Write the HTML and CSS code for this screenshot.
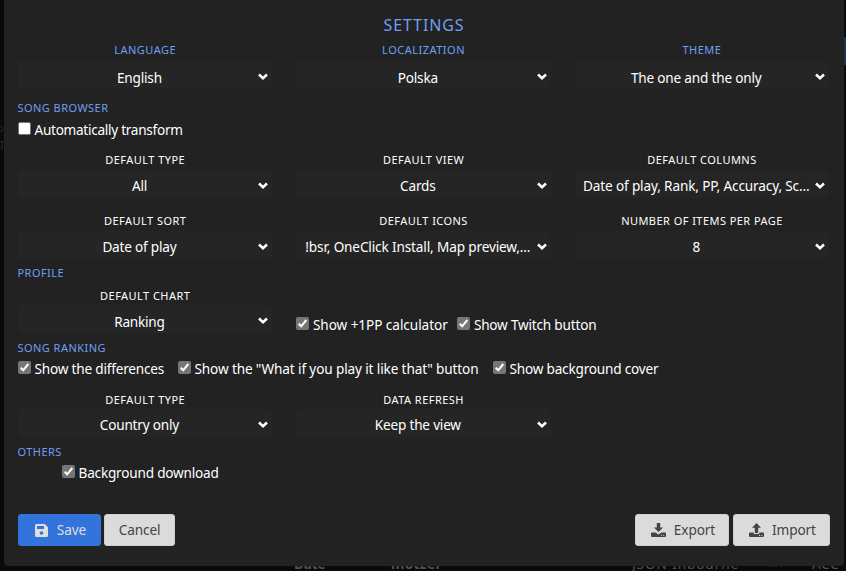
FILE: index.html
```
<!DOCTYPE html>
<html lang="en">
<head>
<meta charset="utf-8">
<title>Settings</title>
<link rel="stylesheet" href="styles.css">
</head>
<body>
<svg width="0" height="0" class="defs">
  <symbol id="chev" viewBox="0 0 10 7"><path d="M1 1.5 5 5.2 9 1.5" fill="none" stroke="#fff" stroke-width="2.5"/></symbol>
  <symbol id="tick" viewBox="0 0 13 13"><path d="M2.7 6.8 5.2 9.3 10.3 3" fill="none" stroke="#fff" stroke-width="2"/></symbol>
  <symbol id="disk" viewBox="0 0 13 13"><path fill="currentColor" fill-rule="evenodd" d="M1.5 0H9.7L13 3.3V11.5Q13 13 11.5 13H1.5Q0 13 0 11.5V1.5Q0 0 1.5 0ZM2 2V5H9V2ZM6.5 7.2A1.8 1.8 0 1 0 6.5 10.8 1.8 1.8 0 1 0 6.5 7.2Z"/></symbol>
  <symbol id="down" viewBox="0 0 15 14"><path fill="currentColor" d="M5.8 0H9.2V4.5H12L7.5 9 3 4.5H5.8Z"/><path fill="currentColor" fill-rule="evenodd" d="M1 9.5H4.5L7.5 11.5 10.5 9.5H14Q15 9.5 15 10.5V13Q15 14 14 14H1Q0 14 0 13V10.5Q0 9.5 1 9.5ZM10 11.7V12.7H11V11.7ZM12.2 11.7V12.7H13.2V11.7Z"/></symbol>
  <symbol id="up" viewBox="0 0 15 14"><path fill="currentColor" d="M5.8 10H9.2V4.8H12L7.5 0 3 4.8H5.8Z"/><path fill="currentColor" fill-rule="evenodd" d="M1 9.5H4.8V11H10.2V9.5H14Q15 9.5 15 10.5V13Q15 14 14 14H1Q0 14 0 13V10.5Q0 9.5 1 9.5ZM10 11.9V12.9H11V11.9ZM12.2 11.9V12.9H13.2V11.9Z"/></symbol>
</svg>
<div class="backdrop"><span class="b-date">Date</span><span class="b-name">motzel</span><span class="b-song">JSON Inbourne</span><span class="b-mark">××</span><span class="b-acc">ACC</span></div>
<i class="edge"></i><span class="ghost">o<br>q</span>
<main class="modal">
  <h1>Settings</h1>
  <section class="row first">
    <div class="field"><label class="blue">Language</label><div class="select"><span>English</span><svg><use href="#chev"/></svg></div></div>
    <div class="field"><label class="blue">Localization</label><div class="select"><span>Polska</span><svg><use href="#chev"/></svg></div></div>
    <div class="field"><label class="blue">Theme</label><div class="select"><span>The one and the only</span><svg><use href="#chev"/></svg></div></div>
  </section>
  <h2 class="h-browser">Song browser</h2>
  <div class="checks auto"><label class="check"><i class="box off"></i><span>Automatically transform</span></label></div>
  <section class="row second">
    <div class="field"><label>Default type</label><div class="select"><span>All</span><svg><use href="#chev"/></svg></div></div>
    <div class="field"><label>Default view</label><div class="select"><span>Cards</span><svg><use href="#chev"/></svg></div></div>
    <div class="field"><label>Default columns</label><div class="select"><span class="w-cols">Date of play, Rank, PP, Accuracy, Sc...</span><svg><use href="#chev"/></svg></div></div>
  </section>
  <section class="row third">
    <div class="field"><label>Default sort</label><div class="select"><span>Date of play</span><svg><use href="#chev"/></svg></div></div>
    <div class="field"><label>Default icons</label><div class="select"><span class="w-icons">!bsr, OneClick Install, Map preview,...</span><svg><use href="#chev"/></svg></div></div>
    <div class="field"><label>Number of items per page</label><div class="select"><span>8</span><svg><use href="#chev"/></svg></div></div>
  </section>
  <h2 class="h-profile">Profile</h2>
  <section class="row chart">
    <div class="field"><label>Default chart</label><div class="select"><span>Ranking</span><svg><use href="#chev"/></svg></div></div>
    <div class="checks profile"><label class="check c-calc"><i class="box"><svg><use href="#tick"/></svg></i><span>Show +1PP calculator</span></label><label class="check"><i class="box"><svg><use href="#tick"/></svg></i><span>Show Twitch button</span></label></div>
  </section>
  <h2>Song ranking</h2>
  <div class="checks ranking"><label class="check c-diff"><i class="box"><svg><use href="#tick"/></svg></i><span>Show the differences</span></label><label class="check c-what"><i class="box"><svg><use href="#tick"/></svg></i><span>Show the "What if you play it like that" button</span></label><label class="check"><i class="box"><svg><use href="#tick"/></svg></i><span>Show background cover</span></label></div>
  <section class="row fifth">
    <div class="field"><label>Default type</label><div class="select"><span>Country only</span><svg><use href="#chev"/></svg></div></div>
    <div class="field"><label>Data refresh</label><div class="select"><span>Keep the view</span><svg><use href="#chev"/></svg></div></div>
  </section>
  <h2>Others</h2>
  <div class="checks others"><label class="check"><i class="box"><svg><use href="#tick"/></svg></i><span>Background download</span></label></div>
  <footer>
    <button class="save"><svg class="disk"><use href="#disk"/></svg>Save</button>
    <button class="cancel">Cancel</button>
    <button class="export"><svg><use href="#down"/></svg>Export</button>
    <button class="import"><svg><use href="#up"/></svg>Import</button>
  </footer>
</main>
</body>
</html>
```
FILE: styles.css
```
* { box-sizing: border-box; }
body { margin: 0; height: 571px; overflow: hidden; position: relative; background: #0a0a0a; color: #fff; font: 13.6px/20px "Noto Sans", "Open Sans", sans-serif; letter-spacing: -.2px; }
.defs { position: absolute; }
.modal { position: relative; display: flex; flex-direction: column; width: 840px; height: 566px; margin-left: 4px; padding: 0 14px 0 14px; background: #222; border-radius: 0 0 4px 4px; }
h1 { margin: 0; height: 42px; padding-top: 15px; font-size: 16px; line-height: 20px; font-weight: 400; letter-spacing: .9px; text-align: center; text-transform: uppercase; color: #6f9ff5; }
h2, .field label { display: block; margin: 0; height: 16px; font-size: 11px; line-height: 16px; font-weight: 400; letter-spacing: .45px; text-transform: uppercase; white-space: nowrap; }
h2, .field .blue { color: #6f9ff5; }
h2 { margin: 7px 0 3px; text-indent: -.5px; }
.first label { letter-spacing: .5px; }
.h-browser { margin: 11px 0 4px; }
.h-profile { margin: 6px 0 7px; }
.row { display: grid; grid-template-columns: repeat(3, 254.4px); column-gap: 24px; }
.field { text-align: center; }
.select { display: flex; align-items: center; height: 28px; margin-top: 1px; padding: 5px 4px 0 8px; border-radius: 4px; background: #252525; }
.select span { flex: 1; white-space: nowrap; text-align: center; padding-right: 5.5px; }
.select svg { width: 10px; height: 7px; flex: none; margin-top: -2px; }
.first .select { margin-top: 3px; }
.first .select svg { margin-top: -3px; }
.second .select, .third .select { margin-top: 2px; }
.second .select span, .third .select span { margin-top: -2px; }
.second .select svg, .third .select svg { margin-top: -3px; }
.second { margin-top: 12px; }
.third { margin-top: 15px; }
.select .w-cols, .select .w-icons { letter-spacing: -.14px; }
.checks { display: flex; height: 20px; }
.check { display: flex; flex: none; align-items: center; white-space: nowrap; }
.box { width: 13px; height: 13px; margin: -3px 3.5px 0 0; border-radius: 2px; background: #767676; flex: none; }
.box svg { display: block; width: 13px; height: 13px; }
.off { background: #fff; border: 1px solid #767676; }
.auto { letter-spacing: -.28px; }
.chart { margin-bottom: -2px; }
.profile { margin-top: 27px; }
.c-calc { width: 161px; letter-spacing: -.06px; }
.c-diff { width: 160px; }
.c-what { width: 315px; letter-spacing: -.13px; }
.fifth { margin-top: 13px; }
.fifth .select span { margin-top: -1px; }
.others { margin-left: 44px; }
footer { display: flex; margin-top: 31px; }
button { display: flex; align-items: center; justify-content: center; height: 32px; padding: 0; border: 1px solid #cfcfcf; border-radius: 3px; background: #dbdbdb; color: #444; font: inherit; letter-spacing: -.1px; }
button svg { width: 15px; height: 14px; margin: 0 8px 0 2px; }
.save { width: 83px; margin-right: 3px; background: #3273dc; border-color: #3273dc; color: #dedede; }
.save .disk { width: 13px; height: 13px; margin: 0 9px 0 2px; }
.cancel { width: 71px; }
.export { width: 94px; margin-left: auto; }
.import { width: 97px; margin-left: 4px; }
.backdrop span { position: absolute; top: 554px; line-height: 20px; color: #505050; }
.backdrop .b-date { left: 294px; font-weight: 700; }
.backdrop .b-name { left: 391px; font-weight: 700; letter-spacing: .4px; }
.backdrop .b-song { left: 632px; letter-spacing: .9px; }
.backdrop .b-mark { left: 767px; color: #612020; }
.backdrop .b-acc { left: 812px; letter-spacing: .6px; }
.edge { position: absolute; left: 844px; top: 37px; width: 2px; height: 28px; background: #153456; }
.ghost { position: absolute; left: -3px; top: 120px; font-size: 11px; line-height: 15px; color: #123144; }
```
